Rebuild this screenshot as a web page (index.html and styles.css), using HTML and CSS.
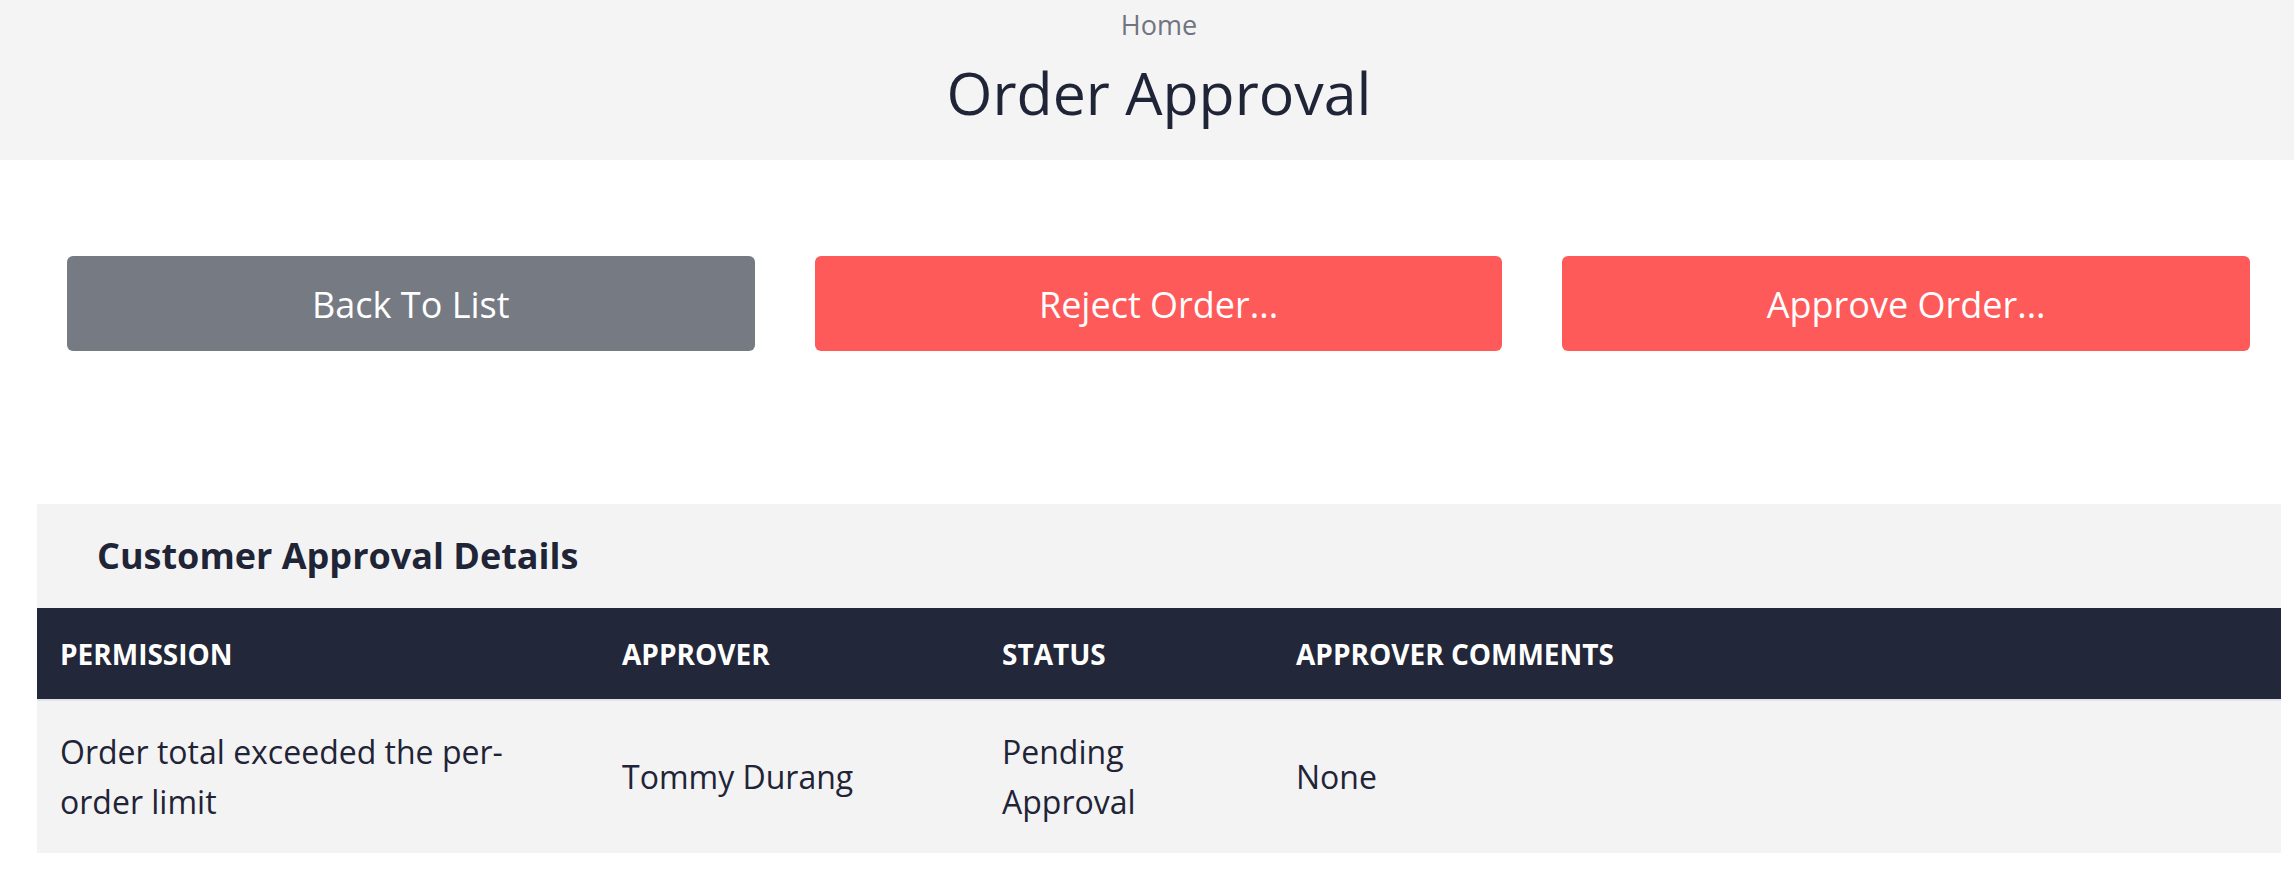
FILE: index.html
```html
<!DOCTYPE html>
<html lang="en">
<head>
<meta charset="utf-8">
<title>Order Approval</title>
<link rel="stylesheet" href="styles.css">
</head>
<body>
<header class="page-header">
  <div class="breadcrumb">Home</div>
  <h1 class="title">Order Approval</h1>
</header>
<main class="main">
  <div class="actions">
    <button class="btn btn-secondary" type="button">Back To List</button>
    <button class="btn btn-primary" type="button">Reject Order...</button>
    <button class="btn btn-primary" type="button">Approve Order...</button>
  </div>
  <section class="panel">
    <h2 class="panel-title">Customer Approval Details</h2>
    <table class="approvals">
      <colgroup>
        <col class="col-permission">
        <col class="col-approver">
        <col class="col-status">
        <col class="col-comments">
      </colgroup>
      <thead>
        <tr>
          <th>PERMISSION</th>
          <th>APPROVER</th>
          <th>STATUS</th>
          <th>APPROVER COMMENTS</th>
        </tr>
      </thead>
      <tbody>
        <tr>
          <td>Order total exceeded the per-order limit</td>
          <td>Tommy Durang</td>
          <td>Pending Approval</td>
          <td>None</td>
        </tr>
      </tbody>
    </table>
  </section>
</main>
</body>
</html>
```
FILE: styles.css
```css
html, body {
  margin: 0;
  padding: 0;
}

body {
  font-family: "Open Sans", "DejaVu Sans", sans-serif;
  color: #1f2437;
  background: #ffffff;
}

.page-header {
  box-sizing: border-box;
  height: 160px;
  padding: 6px 13px 0 37px;
  background: #f4f4f4;
  text-align: center;
}

.breadcrumb {
  font-size: 27px;
  line-height: 37px;
  color: #6f7480;
}

.title {
  margin: 10px 0 0;
  font-size: 59px;
  font-weight: 400;
  line-height: 79px;
  color: #1f2437;
}

.main {
  padding: 96px 13px 0 37px;
}

.actions {
  display: flex;
  gap: 60px;
  padding: 0 31px 0 30px;
}

.btn {
  flex: 1 1 0;
  height: 95px;
  padding-top: 2px;
  border: 0;
  border-radius: 6px;
  font-family: "Open Sans", "DejaVu Sans", sans-serif;
  font-size: 36px;
  line-height: 49px;
  color: #ffffff;
  cursor: pointer;
}

.btn-secondary {
  background: #767a83;
}

.btn-primary {
  background: #ff5a5a;
}

.panel {
  margin-top: 153px;
  background: #f3f3f3;
}

.panel-title {
  margin: 0;
  padding: 26px 60px 27px;
  font-size: 36px;
  font-weight: 700;
  line-height: 51px;
  color: #1f2437;
}

.approvals {
  width: 100%;
  border-collapse: collapse;
  table-layout: fixed;
}

.col-permission { width: 562px; }
.col-approver { width: 380px; }
.col-status { width: 294px; }

.approvals th {
  padding: 27px 22px 26px 23px;
  background: #222739;
  border-bottom: 2px solid #e1e3ea;
  color: #ffffff;
  font-size: 28px;
  font-weight: 700;
  line-height: 38px;
  text-align: left;
}

.approvals td {
  padding: 26px 22px 26px 23px;
  font-size: 32px;
  line-height: 50px;
  vertical-align: middle;
  color: #1f2437;
}
```
